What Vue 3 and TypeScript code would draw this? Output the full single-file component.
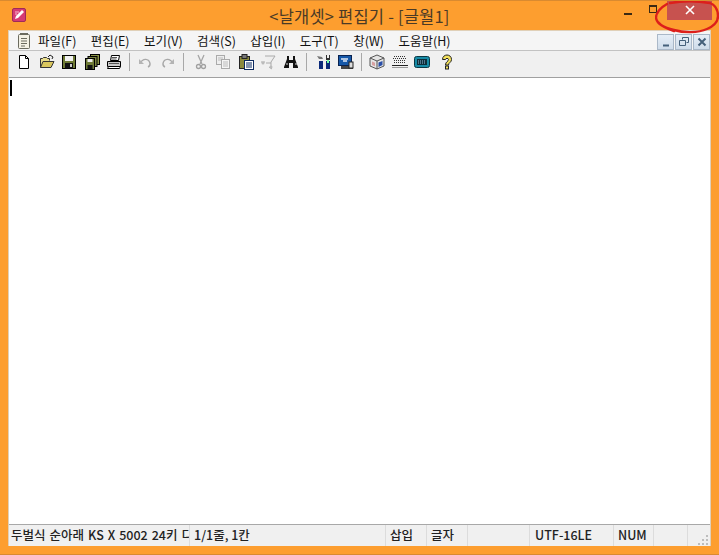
<script setup lang="ts">
const menus = ["파일(F)", "편집(E)", "보기(V)", "검색(S)", "삽입(I)", "도구(T)", "창(W)", "도움말(H)"];
</script>

<template>
  <div class="window">
    <header class="titlebar">
      <svg class="app-icon" width="14" height="14" viewBox="0 0 14 14">
        <rect x="0.5" y="0.5" width="13" height="13" rx="1.5" fill="#d63a73" stroke="#a02a58" />
        <path d="M3 11 L4 8 L10 2 L12 4 L6 10 Z" fill="#fff" />
        <path d="M3 4h4M3 6h2" stroke="#f7bcd2" />
      </svg>
      <div class="title">&lt;날개셋&gt; 편집기 - [글월1]</div>
      <div class="caption">
        <span class="cap-btn"><i class="cap-min" /></span>
        <span class="cap-btn"><i class="cap-max" /></span>
        <span class="cap-close">
          <svg width="10" height="10" viewBox="0 0 10 10"><path d="M1 1L9 9M9 1L1 9" stroke="#fff" stroke-width="1.6" /></svg>
        </span>
      </div>
    </header>

    <div class="client">
      <nav class="menubar">
        <svg class="doc-icon" width="14" height="17" viewBox="0 0 14 17">
          <rect x="1.5" y="2.5" width="11" height="14" rx="1" fill="#f4f1e4" stroke="#6b6b5e" />
          <path d="M3 1.5h8M4 6.5h6M4 9h6M4 11.5h6M4 14h4" stroke="#6b6b5e" />
        </svg>
        <span v-for="m in menus" :key="m" class="menu">{{ m }}</span>
        <div class="mdi">
          <span class="mdi-btn"><svg width="10" height="10" viewBox="0 0 10 10"><path d="M2 8.500h6" stroke="#45607a" stroke-width="2" /></svg></span>
          <span class="mdi-btn"><svg width="10" height="10" viewBox="0 0 10 10"><path d="M3.500 2.500V0.500h6v5h-2M0.500 3.500h6v5h-6z" fill="none" stroke="#45607a" /></svg></span>
          <span class="mdi-btn"><svg width="10" height="10" viewBox="0 0 10 10"><path d="M1.500 1.500L8.500 8.500M8.500 1.500L1.500 8.500" stroke="#45607a" stroke-width="2" /></svg></span>
        </div>
      </nav>

      <div class="toolbar">
        <!-- new -->
        <svg class="tool" viewBox="0 0 16 16"><path d="M3.500 1.500h6l3 3v10h-9z" fill="#fff" stroke="#000" /><path d="M9.500 1.500v3h3" fill="none" stroke="#000" /></svg>
        <!-- open -->
        <svg class="tool" viewBox="0 0 16 16"><path d="M1.500 13.500v-9h2l1-1h3l1 1h2v2" fill="#e8dc8a" stroke="#333" /><path d="M1.500 13.500l2.500-6h11l-3 6z" fill="#d9c65e" stroke="#333" /><path d="M9 3l2-2 3 2-1 2" fill="none" stroke="#222" /></svg>
        <!-- save -->
        <svg class="tool" viewBox="0 0 16 16"><rect x="1.500" y="1.500" width="13" height="13" fill="#6e7a35" stroke="#000" /><rect x="4" y="2" width="8" height="5" fill="#f2f2f2" /><rect x="4" y="9" width="8" height="5.500" fill="#111" /><rect x="9" y="10" width="2" height="3" fill="#ccc" /></svg>
        <!-- save all -->
        <svg class="tool" viewBox="0 0 16 16"><rect x="6.500" y="0.500" width="9" height="10" fill="#8b9446" stroke="#000" /><rect x="4" y="2.500" width="9" height="10" fill="#7b8540" stroke="#000" /><rect x="1.500" y="4.500" width="9" height="11" fill="#6e7a35" stroke="#000" /><rect x="3.500" y="5" width="5" height="3" fill="#eee" /><rect x="3.500" y="11" width="5" height="4" fill="#111" /></svg>
        <!-- print -->
        <svg class="tool" viewBox="0 0 16 16"><path d="M5.500 1.500h8l-1 5h-8z" fill="#fff" stroke="#000" /><path d="M1.500 7.500h13v5h-13z" fill="#c8c8c8" stroke="#000" /><path d="M2.500 12.500l-1 2h12l1-2z" fill="#fff" stroke="#000" /><path d="M6 3.500h5M5.500 5h5M3 9.500h10" stroke="#555" /></svg>
        <i class="sep" />
        <!-- undo / redo -->
        <svg class="tool" viewBox="0 0 16 16"><path d="M3 9.500c3-6 9-5 10 0 .3 2-1 3-2 3.500" fill="none" stroke="#a8a8a8" stroke-width="1.400" /><path d="M2 5v5h5z" fill="#b4b4b4" /></svg>
        <svg class="tool" viewBox="0 0 16 16"><path d="M13 9.500c-3-6-9-5-10 0-.3 2 1 3 2 3.500" fill="none" stroke="#a8a8a8" stroke-width="1.400" /><path d="M14 5v5H9z" fill="#b4b4b4" /></svg>
        <i class="sep wide" />
        <!-- cut -->
        <svg class="tool" viewBox="0 0 16 16"><path d="M5 1l4 9M11 1L7 10" stroke="#a5a5a5" stroke-width="1.300" /><circle cx="5.500" cy="12.500" r="2" fill="none" stroke="#a0a0a0" stroke-width="1.300" /><circle cx="10.500" cy="12.500" r="2" fill="none" stroke="#a0a0a0" stroke-width="1.300" /></svg>
        <!-- copy -->
        <svg class="tool" viewBox="0 0 16 16"><rect x="1.500" y="1.500" width="8" height="9" fill="#eee" stroke="#aaa" /><rect x="6.500" y="5.500" width="8" height="9" fill="#f4f4f4" stroke="#aaa" /><path d="M8 8h5M8 10h5M8 12h5M3 4h5M3 6h3" stroke="#bbb" /></svg>
        <!-- paste -->
        <svg class="tool" viewBox="0 0 16 16"><rect x="1.500" y="2.500" width="10" height="12" fill="#8b8a3e" stroke="#222" /><rect x="4" y="0.500" width="5" height="4" fill="#777" stroke="#222" /><rect x="6.500" y="6.500" width="9" height="9" fill="#fff" stroke="#0b2a60" /><path d="M8 9h6M8 11h6M8 13h6" stroke="#0b2a60" /></svg>
        <!-- filter -->
        <svg class="tool" viewBox="0 0 16 16"><path d="M5 2h10l-4 6v5" fill="#eee" stroke="#aaa" /><path d="M1 8h4M11 9l-5 0M9 13l3 2" stroke="#aaa" /><circle cx="3" cy="9" r="1.500" fill="#bbb" /><circle cx="11" cy="13" r="1.500" fill="#bbb" /></svg>
        <!-- find -->
        <svg class="tool" viewBox="0 0 16 16"><path d="M4 2h2v4h4V2h2v3l3 8v1H10V9H6v5H1v-1l3-8z" fill="#111" /><path d="M3 10h2M12 10h2" stroke="#d8d8d8" /></svg>
        <i class="sep wide" />
        <!-- tools -->
        <svg class="tool" viewBox="0 0 16 16"><path d="M1 2l5 1 1 2H3z" fill="#777" /><rect x="3" y="7" width="4" height="8" fill="#0b2a7a" /><rect x="10" y="7" width="4" height="8" fill="#0b2a7a" /><path d="M10 1h1v3h2V1h1v5h-4z" fill="#333" /><rect x="11" y="6" width="2" height="3" fill="#7fa" /></svg>
        <!-- monitor -->
        <svg class="tool" viewBox="0 0 16 16"><rect x="0.500" y="1.500" width="13" height="10" fill="#1658a8" stroke="#0a2250" /><path d="M3 5h7M5 7h4" stroke="#dfe8f5" stroke-width="1.500" /><rect x="3" y="12" width="12" height="3" fill="#444" /><rect x="11" y="8" width="4" height="6" fill="#ddd" stroke="#222" /></svg>
        <i class="sep" />
        <!-- cube -->
        <svg class="tool" viewBox="0 0 16 16"><path d="M8 1l7 3v8l-7 3-7-3V4z" fill="#e5e5e5" stroke="#555" /><path d="M1 4l7 3 7-3M8 7v8" fill="none" stroke="#555" /><path d="M9.500 8.500l4-1.500v4l-4 2z" fill="#2a4fa8" /><path d="M3 7.500l3 1.200v3.500l-3-1.200z" fill="#d8a0a0" /></svg>
        <!-- keyboard -->
        <svg class="tool" viewBox="0 0 16 16"><path d="M2 2.500h12M1 4.500h14M2 6.500h12M2 8.500h12" stroke="#333" stroke-dasharray="1 1" /><path d="M0 11.500h16" stroke="#222" /><path d="M0 13.500h16" stroke="#999" /></svg>
        <!-- terminal -->
        <svg class="tool" viewBox="0 0 16 16"><rect x="0.500" y="2.500" width="15" height="11" rx="2" fill="#178ba6" stroke="#0a3844" /><rect x="3" y="5" width="10" height="6" fill="#0d2f3a" /><path d="M4 7h8M4 9h8" stroke="#9bd" stroke-dasharray="1 1" /></svg>
        <!-- help -->
        <svg class="tool help" viewBox="0 0 16 16"><path d="M3.500 5.500c0-6 9-6 9 0 0 3-3 3-3 5.500H6.500c0-3.500 3-3.500 3-5.500 0-1.500-3-1.500-3 0z" fill="#f2e05a" stroke="#222" /><rect x="6.500" y="12" width="3" height="3" fill="#f2e05a" stroke="#222" /></svg>
      </div>

      <main class="editor"><i class="caret" /></main>

      <footer class="statusbar">
        <span class="pane ime">두벌식 순아래 KS X 5002 24키 디</span>
        <span class="pane pos">1/1줄, 1칸</span>
        <span class="pane ins">삽입</span>
        <span class="pane mode">글자</span>
        <span class="pane blank" />
        <span class="pane enc">UTF-16LE</span>
        <span class="pane num">NUM</span>
        <span class="pane tail" />
        <span class="grip">
          <svg width="12" height="12" viewBox="0 0 12 12"><path d="M9 1h2v2H9zM5 5h2v2H5zM9 5h2v2H9zM1 9h2v2H1zM5 9h2v2H5zM9 9h2v2H9z" fill="#bdbdbd" /></svg>
        </span>
      </footer>
    </div>

    <!-- red marker scribble drawn over the close button -->
    <svg class="scribble" width="66" height="36" viewBox="0 0 66 36">
      <path d="M12 3C5 7 1 12 1 17c1 6 9 10 18 12 10 3 24 3 33-1 7-3 11-8 11-13 0-6-3-11-8-13C43 0 26 0 15 2 M3 21c4 5 10 7 16 9" fill="none" stroke="#dd1f1b" stroke-width="2.400" stroke-linecap="round" />
    </svg>
  </div>
</template>

<style>
html,
body {
  margin: 0;
  background: #ff9e2e;
}
</style>

<style scoped>
.window {
  position: relative;
  width: 719px;
  height: 555px;
  box-sizing: border-box;
  padding: 0 8px 8px;
  background: #fd9e2f;
  border-top: 1px solid #d98a30;
  border-bottom: 1px solid #d98a30;
  display: flex;
  flex-direction: column;
  font-family: "Noto Sans CJK KR", "Liberation Sans", sans-serif;
  overflow: hidden;
}
.titlebar {
  height: 29px;
  flex: none;
  display: flex;
  align-items: center;
  position: relative;
  margin: 0 -8px;
  padding-left: 12px;
}
.app-icon {
  margin-bottom: 1px;
}
.title {
  position: absolute;
  left: 0;
  right: 0;
  top: 4px;
  text-align: center;
  font-size: 16.5px;
  line-height: 22px;
  letter-spacing: 0.2px;
  color: #4a3a26;
}
.caption {
  position: absolute;
  top: -1px;
  right: 7px;
  display: flex;
}
.cap-btn {
  width: 25px;
  height: 20px;
  display: flex;
  align-items: center;
  justify-content: center;
}
.cap-min {
  width: 8px;
  height: 2px;
  margin-top: 8px;
  background: #3b2a14;
}
.cap-max {
  width: 6px;
  height: 5px;
  margin-top: -2px;
  border: 1px solid #3b2a14;
  border-top-width: 2px;
}
.cap-close {
  width: 45px;
  height: 20px;
  margin-left: 2px;
  background: #c7524f;
  display: flex;
  align-items: center;
  justify-content: center;
}
.client {
  flex: 1;
  min-height: 0;
  display: flex;
  flex-direction: column;
  background: #f0f0f0;
  border: 1px solid #e0d0b8;
  border-width: 1px 1px 0;
}
.menubar {
  height: 19px;
  flex: none;
  display: flex;
  align-items: center;
  padding-left: 8px;
  background: #f5f5f5;
  border-bottom: 1px solid #c2c2c2;
}
.doc-icon {
  margin-right: 7px;
}
.menu {
  font-size: 12.5px;
  line-height: 19px;
  color: #111;
  margin-right: 14.4px;
  white-space: nowrap;
}
.mdi {
  margin-left: auto;
  display: flex;
  gap: 1px;
  padding-top: 2px;
}
.mdi-btn {
  width: 17px;
  height: 16px;
  box-sizing: border-box;
  background: linear-gradient(#e6eef7, #cfdcea);
  border: 1px solid #aab8c8;
  display: flex;
  align-items: center;
  justify-content: center;
}
.toolbar {
  height: 27px;
  box-sizing: border-box;
  flex: none;
  display: flex;
  align-items: center;
  padding: 0 0 5px 7px;
  gap: 6.5px;
  background: #f0f0f0;
  border-bottom: 1px solid #a0a0a0;
}
.tool {
  width: 16px;
  height: 16px;
  flex: none;
}
.tool.help {
  margin-left: 2px;
}
.sep {
  width: 1px;
  height: 18px;
  margin: 0 0.5px;
  background: #a8a8a8;
  flex: none;
}
.sep.wide {
  margin-right: 2.5px;
}
.editor {
  flex: 1;
  min-height: 0;
  background: #fff;
  position: relative;
  padding: 2px 1px;
  border-bottom: 1px solid #a8a8a8;
}
.caret {
  display: block;
  width: 2px;
  height: 16px;
  background: #000;
}
.statusbar {
  height: 21px;
  flex: none;
  display: flex;
  align-items: center;
  background: #f0f0f0;
  font-size: 12.5px;
  font-weight: 500;
  color: #222;
}
.pane {
  height: 100%;
  box-sizing: border-box;
  line-height: 20px;
  flex: none;
  overflow: hidden;
  white-space: nowrap;
  border-right: 1px solid #dcdcdc;
  padding-left: 4px;
}
.ime {
  width: 181px;
  padding-left: 2px;
  word-spacing: 1.2px;
}
.pos {
  width: 196px;
}
.ins {
  width: 41px;
}
.mode {
  width: 41px;
}
.blank {
  width: 62px;
}
.enc {
  width: 84px;
  padding-left: 5px;
}
.num {
  width: 40px;
}
.tail {
  width: 34px;
}
.grip {
  flex: 1;
  display: flex;
  justify-content: flex-end;
  align-items: flex-end;
  align-self: flex-end;
  padding-right: 1px;
}
.scribble {
  position: absolute;
  left: 655px;
  top: 0;
}
</style>
